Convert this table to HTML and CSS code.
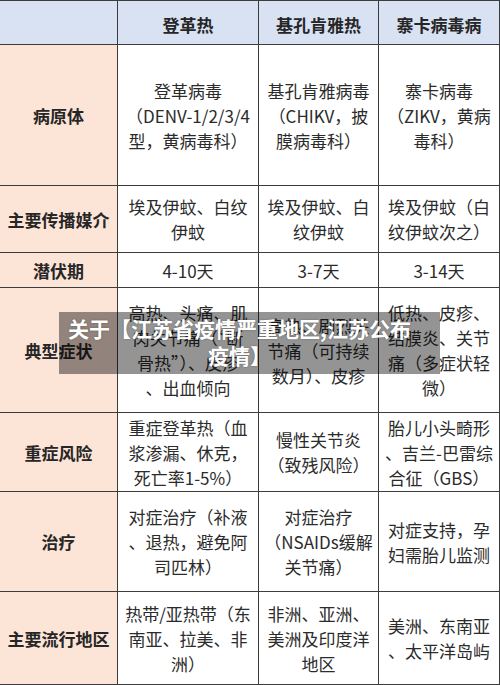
FILE: index.html
```html
<!DOCTYPE html>
<html lang="zh-CN">
<head>
<meta charset="utf-8">
<title>登革热 基孔肯雅热 寨卡病毒病</title>
<link rel="stylesheet" href="styles.css">
</head>
<body>
<div class="page">
  <div class="grid">
    <div class="cell head"></div>
    <div class="cell head">登革热</div>
    <div class="cell head">基孔肯雅热</div>
    <div class="cell head">寨卡病毒病</div>

    <div class="cell label">病原体</div>
    <div class="cell">登革病毒<br>（DENV-1/2/3/4<br>型，黄病毒科）</div>
    <div class="cell">基孔肯雅病毒<br>（CHIKV，披<br>膜病毒科）</div>
    <div class="cell">寨卡病毒<br>（ZIKV，黄病<br>毒科）</div>

    <div class="cell label">主要传播媒介</div>
    <div class="cell">埃及伊蚊、白纹<br>伊蚊</div>
    <div class="cell">埃及伊蚊、白<br>纹伊蚊</div>
    <div class="cell">埃及伊蚊（白<br>纹伊蚊次之）</div>

    <div class="cell label">潜伏期</div>
    <div class="cell">4-10天</div>
    <div class="cell">3-7天</div>
    <div class="cell">3-14天</div>

    <div class="cell label">典型症状</div>
    <div class="cell">高热、头痛、肌<br>肉关节痛（“断<br>骨热”）、皮疹<br>、出血倾向</div>
    <div class="cell">高热、剧烈关<br>节痛（可持续<br>数月）、皮疹</div>
    <div class="cell">低热、皮疹、<br>结膜炎、关节<br>痛（多症状轻<br>微）</div>

    <div class="cell label">重症风险</div>
    <div class="cell">重症登革热（血<br>浆渗漏、休克，<br>死亡率1-5%）</div>
    <div class="cell">慢性关节炎<br>（致残风险）</div>
    <div class="cell">胎儿小头畸形<br>、吉兰-巴雷综<br>合征（GBS）</div>

    <div class="cell label">治疗</div>
    <div class="cell">对症治疗（补液<br>、退热，避免阿<br>司匹林）</div>
    <div class="cell">对症治疗<br>（NSAIDs缓解<br>关节痛）</div>
    <div class="cell">对症支持，孕<br>妇需胎儿监测</div>

    <div class="cell label">主要流行地区</div>
    <div class="cell">热带/亚热带（东<br>南亚、拉美、非<br>洲）</div>
    <div class="cell">非洲、亚洲、<br>美洲及印度洋<br>地区</div>
    <div class="cell">美洲、东南亚<br>、太平洋岛屿</div>
  </div>
  <div class="banner">关于【江苏省疫情严重地区,江苏公布<br>疫情】</div>
</div>
</body>
</html>
```
FILE: styles.css
```css
html, body {
  margin: 0;
  padding: 0;
  background: #ffffff;
}

.page {
  position: relative;
  width: 500px;
  height: 685px;
  overflow: hidden;
  font-family: "Noto Sans CJK SC", "Noto Sans", sans-serif;
}

.grid {
  display: grid;
  grid-template-columns: 117px 140px 119px 120px;
  grid-template-rows: 43px 140px 66px 34px 124px 78px 99px 92px;
  gap: 1px;
  padding: 1px 1px 1px 0;
  background: #3c3c3c;
  width: 500px;
  box-sizing: border-box;
}

.cell {
  display: flex;
  align-items: center;
  justify-content: center;
  text-align: center;
  background: #ffffff;
  color: #2b2b2b;
  font-size: 17px;
  line-height: 25px;
  white-space: nowrap;
  overflow: hidden;
}

.head {
  background: #d9e2f3;
  font-weight: 700;
  color: #262626;
  padding-top: 3px;
}

.label {
  background: #fce4d6;
  font-weight: 700;
  color: #262626;
}

.banner {
  position: absolute;
  left: 59px;
  top: 312px;
  width: 381px;
  height: 62px;
  box-sizing: border-box;
  padding: 3px 20px 0 0;
  background: rgba(0, 0, 0, 0.42);
  color: #ffffff;
  font-weight: 700;
  font-size: 21px;
  line-height: 27px;
  text-align: center;
  white-space: nowrap;
  text-shadow: 0 0 2px rgba(0, 0, 0, 0.35);
}
```
